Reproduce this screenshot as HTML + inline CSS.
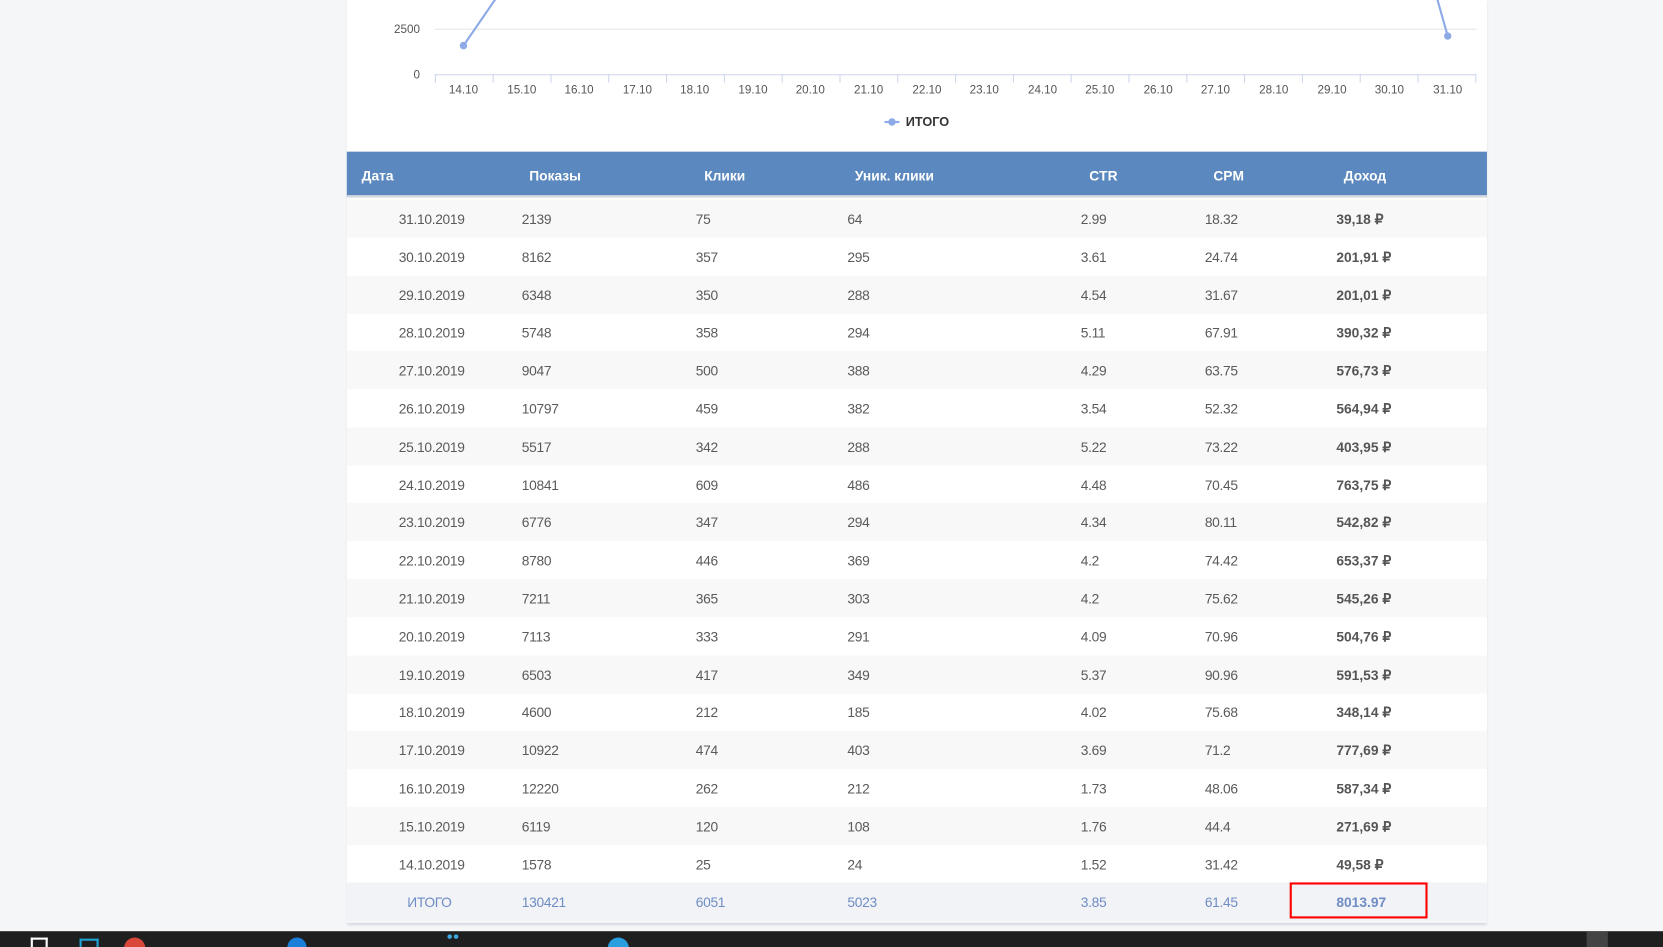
<!DOCTYPE html>
<html><head><meta charset="utf-8"><style>
*{margin:0;padding:0;box-sizing:border-box}
html,body{width:1663px;height:947px;overflow:hidden;background:#f5f6f8}
#w{width:1568px;height:893px;position:relative;overflow:hidden;transform:scale(1.06059);transform-origin:0 0;font-family:"Liberation Sans",sans-serif}
.card{position:absolute;left:327px;top:0;width:1075px;height:870px;background:#fff;box-shadow:0 2px 2px #d5dae2}
.hdr{position:absolute;left:327px;top:143px;width:1075px;height:43px;background:#5b88be;border-bottom:2px solid #d7dbe0}
.hdr span{position:absolute;top:15px;color:#fff;font-weight:bold;font-size:13px}
.row{position:absolute;left:327px;width:1075px;height:36px;font-size:13px;color:#5a5a5a}
.row span{position:absolute;top:11px;letter-spacing:-0.3px}
.row b{position:absolute;top:11px;color:#555;font-size:13px}
.g{background:#f8f8f8}
.tot{background:#f1f3f7;color:#6f8cc4}
.tot span,.tot b{color:#6f8cc4}
.task{position:absolute;left:0;top:878px;width:1568px;height:15px;background:#1f1f1f;overflow:hidden}
</style></head><body><div id="w">
<div class="card"></div>
<svg style="position:absolute;left:0;top:0" width="1568" height="140">
<line x1="410" y1="27.5" x2="1392" y2="27.5" stroke="#e4e6ea"/>
<line x1="410" y1="70.5" x2="1392" y2="70.5" stroke="#ccd6eb"/>
<g stroke="#ccd6eb">
<line x1="410.5" y1="70" x2="410.5" y2="78"/><line x1="465" y1="70" x2="465" y2="78"/><line x1="519.5" y1="70" x2="519.5" y2="78"/><line x1="574" y1="70" x2="574" y2="78"/><line x1="628.5" y1="70" x2="628.5" y2="78"/><line x1="683" y1="70" x2="683" y2="78"/><line x1="737.5" y1="70" x2="737.5" y2="78"/><line x1="792" y1="70" x2="792" y2="78"/><line x1="846.5" y1="70" x2="846.5" y2="78"/><line x1="901" y1="70" x2="901" y2="78"/><line x1="955.5" y1="70" x2="955.5" y2="78"/><line x1="1010" y1="70" x2="1010" y2="78"/><line x1="1064.5" y1="70" x2="1064.5" y2="78"/><line x1="1119" y1="70" x2="1119" y2="78"/><line x1="1173.5" y1="70" x2="1173.5" y2="78"/><line x1="1228" y1="70" x2="1228" y2="78"/><line x1="1282.5" y1="70" x2="1282.5" y2="78"/><line x1="1337" y1="70" x2="1337" y2="78"/><line x1="1391.5" y1="70" x2="1391.5" y2="78"/>
</g>
<polyline points="437,43 470,-5" fill="none" stroke="#8eaae6" stroke-width="2"/>
<polyline points="1354,-5 1365,34" fill="none" stroke="#8eaae6" stroke-width="2"/>
<circle cx="437" cy="43" r="3.5" fill="#8eaae6"/><circle cx="1365" cy="34" r="3.5" fill="#8eaae6"/>
<g font-family="Liberation Sans" font-size="11" fill="#555" text-anchor="middle">
<text x="437" y="88">14.10</text><text x="492" y="88">15.10</text><text x="546" y="88">16.10</text><text x="601" y="88">17.10</text><text x="655" y="88">18.10</text><text x="710" y="88">19.10</text><text x="764" y="88">20.10</text><text x="819" y="88">21.10</text><text x="874" y="88">22.10</text><text x="928" y="88">23.10</text><text x="983" y="88">24.10</text><text x="1037" y="88">25.10</text><text x="1092" y="88">26.10</text><text x="1146" y="88">27.10</text><text x="1201" y="88">28.10</text><text x="1256" y="88">29.10</text><text x="1310" y="88">30.10</text><text x="1365" y="88">31.10</text>
</g>
<g font-family="Liberation Sans" font-size="11" fill="#555" text-anchor="end"><text x="396" y="31">2500</text><text x="396" y="74">0</text></g>
<line x1="834" y1="115" x2="848" y2="115" stroke="#8eaae6" stroke-width="2"/><circle cx="841" cy="115" r="3.5" fill="#8eaae6"/>
<text x="854" y="119" font-family="Liberation Sans" font-size="12" font-weight="bold" fill="#333">ИТОГО</text>
</svg>
<div class="hdr"><span style="left:14px">Дата</span><span style="left:172px">Показы</span><span style="left:337px">Клики</span><span style="left:479px">Уник. клики</span><span style="left:700px">CTR</span><span style="left:817px">CPM</span><span style="left:940px">Доход</span></div>
<div class="row g" style="top:188px"><span style="left:49px">31.10.2019</span><span style="left:165px">2139</span><span style="left:329px">75</span><span style="left:472px">64</span><span style="left:692px">2.99</span><span style="left:809px">18.32</span><b style="left:933px">39,18 ₽</b></div>
<div class="row" style="top:224px"><span style="left:49px">30.10.2019</span><span style="left:165px">8162</span><span style="left:329px">357</span><span style="left:472px">295</span><span style="left:692px">3.61</span><span style="left:809px">24.74</span><b style="left:933px">201,91 ₽</b></div>
<div class="row g" style="top:260px"><span style="left:49px">29.10.2019</span><span style="left:165px">6348</span><span style="left:329px">350</span><span style="left:472px">288</span><span style="left:692px">4.54</span><span style="left:809px">31.67</span><b style="left:933px">201,01 ₽</b></div>
<div class="row" style="top:295px"><span style="left:49px">28.10.2019</span><span style="left:165px">5748</span><span style="left:329px">358</span><span style="left:472px">294</span><span style="left:692px">5.11</span><span style="left:809px">67.91</span><b style="left:933px">390,32 ₽</b></div>
<div class="row g" style="top:331px"><span style="left:49px">27.10.2019</span><span style="left:165px">9047</span><span style="left:329px">500</span><span style="left:472px">388</span><span style="left:692px">4.29</span><span style="left:809px">63.75</span><b style="left:933px">576,73 ₽</b></div>
<div class="row" style="top:367px"><span style="left:49px">26.10.2019</span><span style="left:165px">10797</span><span style="left:329px">459</span><span style="left:472px">382</span><span style="left:692px">3.54</span><span style="left:809px">52.32</span><b style="left:933px">564,94 ₽</b></div>
<div class="row g" style="top:403px"><span style="left:49px">25.10.2019</span><span style="left:165px">5517</span><span style="left:329px">342</span><span style="left:472px">288</span><span style="left:692px">5.22</span><span style="left:809px">73.22</span><b style="left:933px">403,95 ₽</b></div>
<div class="row" style="top:439px"><span style="left:49px">24.10.2019</span><span style="left:165px">10841</span><span style="left:329px">609</span><span style="left:472px">486</span><span style="left:692px">4.48</span><span style="left:809px">70.45</span><b style="left:933px">763,75 ₽</b></div>
<div class="row g" style="top:474px"><span style="left:49px">23.10.2019</span><span style="left:165px">6776</span><span style="left:329px">347</span><span style="left:472px">294</span><span style="left:692px">4.34</span><span style="left:809px">80.11</span><b style="left:933px">542,82 ₽</b></div>
<div class="row" style="top:510px"><span style="left:49px">22.10.2019</span><span style="left:165px">8780</span><span style="left:329px">446</span><span style="left:472px">369</span><span style="left:692px">4.2</span><span style="left:809px">74.42</span><b style="left:933px">653,37 ₽</b></div>
<div class="row g" style="top:546px"><span style="left:49px">21.10.2019</span><span style="left:165px">7211</span><span style="left:329px">365</span><span style="left:472px">303</span><span style="left:692px">4.2</span><span style="left:809px">75.62</span><b style="left:933px">545,26 ₽</b></div>
<div class="row" style="top:582px"><span style="left:49px">20.10.2019</span><span style="left:165px">7113</span><span style="left:329px">333</span><span style="left:472px">291</span><span style="left:692px">4.09</span><span style="left:809px">70.96</span><b style="left:933px">504,76 ₽</b></div>
<div class="row g" style="top:618px"><span style="left:49px">19.10.2019</span><span style="left:165px">6503</span><span style="left:329px">417</span><span style="left:472px">349</span><span style="left:692px">5.37</span><span style="left:809px">90.96</span><b style="left:933px">591,53 ₽</b></div>
<div class="row" style="top:653px"><span style="left:49px">18.10.2019</span><span style="left:165px">4600</span><span style="left:329px">212</span><span style="left:472px">185</span><span style="left:692px">4.02</span><span style="left:809px">75.68</span><b style="left:933px">348,14 ₽</b></div>
<div class="row g" style="top:689px"><span style="left:49px">17.10.2019</span><span style="left:165px">10922</span><span style="left:329px">474</span><span style="left:472px">403</span><span style="left:692px">3.69</span><span style="left:809px">71.2</span><b style="left:933px">777,69 ₽</b></div>
<div class="row" style="top:725px"><span style="left:49px">16.10.2019</span><span style="left:165px">12220</span><span style="left:329px">262</span><span style="left:472px">212</span><span style="left:692px">1.73</span><span style="left:809px">48.06</span><b style="left:933px">587,34 ₽</b></div>
<div class="row g" style="top:761px"><span style="left:49px">15.10.2019</span><span style="left:165px">6119</span><span style="left:329px">120</span><span style="left:472px">108</span><span style="left:692px">1.76</span><span style="left:809px">44.4</span><b style="left:933px">271,69 ₽</b></div>
<div class="row" style="top:797px"><span style="left:49px">14.10.2019</span><span style="left:165px">1578</span><span style="left:329px">25</span><span style="left:472px">24</span><span style="left:692px">1.52</span><span style="left:809px">31.42</span><b style="left:933px">49,58 ₽</b></div>
<div class="row tot" style="top:832px;height:37px"><span style="left:57px">ИТОГО</span><span style="left:165px">130421</span><span style="left:329px">6051</span><span style="left:472px">5023</span><span style="left:692px">3.85</span><span style="left:809px">61.45</span><b style="left:933px">8013.97</b></div>
<div style="position:absolute;left:1216px;top:832px;width:130px;height:34px;border:2px solid #f00"></div>
<div class="task">
<div style="position:absolute;left:29px;top:6px;width:16px;height:10px;border:2px solid #fff;border-bottom:none"></div>
<div style="position:absolute;left:75px;top:7px;width:18px;height:10px;border:2px solid #1fa3d6;border-bottom:none"></div>
<div style="position:absolute;left:117px;top:6px;width:20px;height:20px;border-radius:50%;background:#d9473b"></div>
<div style="position:absolute;left:271px;top:6px;width:18px;height:18px;border-radius:50%;background:#1a7fd9"></div>
<div style="position:absolute;left:421px;top:2px;width:20px;height:8px;color:#3ea7e0;font-size:10px;line-height:8px">●●</div>
<div style="position:absolute;left:573px;top:6px;width:20px;height:20px;border-radius:50%;background:#2a9fe0"></div>
<div style="position:absolute;left:1496px;top:0;width:20px;height:20px;background:#444"></div>
</div>
</div></body></html>
